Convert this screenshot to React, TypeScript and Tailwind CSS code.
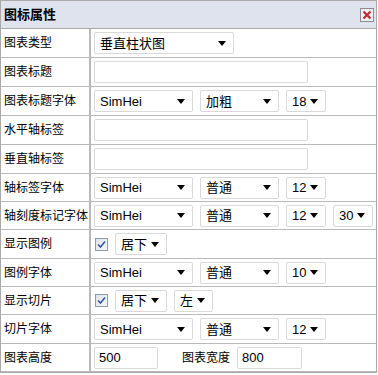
import React from 'react';

function Arrow() {
  return (
    <svg width="8" height="5" viewBox="0 0 8 5" className="shrink-0">
      <path d="M0 0 L8 0 L4 5 Z" fill="#000" />
    </svg>
  );
}

function Select({ value, width }: { value: string; width: string }) {
  return (
    <div
      className={`${width} h-[22px] flex items-center justify-between pl-[5px] pr-[7px] bg-white border border-[#d9d9d9] rounded-[2px] text-[13px] text-black`}
    >
      <span className="leading-none">{value}</span>
      <Arrow />
    </div>
  );
}

function TextBox({ value = '', width }: { value?: string; width: string }) {
  return (
    <div
      className={`${width} h-[22px] flex items-center px-[4px] bg-white border border-[#d9d9d9] rounded-[2px] text-[13px] text-black`}
    >
      {value}
    </div>
  );
}

function Check() {
  return (
    <div className="w-[13px] h-[13px] border border-[#8b9ab4] bg-gradient-to-br from-[#dfe3ea] to-[#f6f7f9] flex items-center justify-center">
      <svg width="9" height="9" viewBox="0 0 9 9">
        <path d="M1 4.5 L3.5 7 L8 1.5" stroke="#3b57a8" strokeWidth="1.6" fill="none" />
      </svg>
    </div>
  );
}

function Row({ label, h, children }: { label: string; h: string; children?: React.ReactNode }) {
  return (
    <div className={`flex ${h} border-b border-[#b9b9b9]`}>
      <div className="w-[90px] shrink-0 border-r-2 border-[#b9b9b9] flex items-center pl-[3px] text-[12px] text-black whitespace-nowrap">
        {label}
      </div>
      <div className="flex-1 flex items-center pl-[3px] gap-[7px]">{children}</div>
    </div>
  );
}

export default function App() {
  return (
    <div className="w-[378px] h-[375px] bg-white font-['Liberation_Sans','Noto_Sans_CJK_SC',sans-serif]">
      <div className="w-[377px] border border-[#a9a9a9]">
        {/* Header */}
        <div className="h-[28px] bg-[#dfe3ee] border-b border-[#a9a9a9] flex items-center justify-between pl-[3px] pr-[2px]">
          <span className="text-[13px] font-bold text-black">图标属性</span>
          <div className="w-[14px] h-[14px] border border-[#8c8c8c] bg-[#eef0f5] flex items-center justify-center">
            <svg width="10" height="10" viewBox="0 0 10 10">
              <path d="M1.5 1.5 L8.5 8.5 M8.5 1.5 L1.5 8.5" stroke="#c42a36" strokeWidth="2.2" />
            </svg>
          </div>
        </div>

        <Row label="图表类型" h="h-[29px]">
          <Select value="垂直柱状图" width="w-[140px]" />
        </Row>
        <Row label="图表标题" h="h-[29px]">
          <TextBox width="w-[214px]" />
        </Row>
        <Row label="图表标题字体" h="h-[29px]">
          <Select value="SimHei" width="w-[99px]" />
          <Select value="加粗" width="w-[79px]" />
          <Select value="18" width="w-[40px]" />
        </Row>
        <Row label="水平轴标签" h="h-[29px]">
          <TextBox width="w-[214px]" />
        </Row>
        <Row label="垂直轴标签" h="h-[29px]">
          <TextBox width="w-[214px]" />
        </Row>
        <Row label="轴标签字体" h="h-[28px]">
          <Select value="SimHei" width="w-[99px]" />
          <Select value="普通" width="w-[79px]" />
          <Select value="12" width="w-[40px]" />
        </Row>
        <Row label="轴刻度标记字体" h="h-[28px]">
          <Select value="SimHei" width="w-[99px]" />
          <Select value="普通" width="w-[79px]" />
          <Select value="12" width="w-[40px]" />
          <Select value="30" width="w-[40px]" />
        </Row>
        <Row label="显示图例" h="h-[29px]">
          <div className="pl-[1px]">
            <Check />
          </div>
          <Select value="居下" width="w-[52px]" />
        </Row>
        <Row label="图例字体" h="h-[28px]">
          <Select value="SimHei" width="w-[99px]" />
          <Select value="普通" width="w-[79px]" />
          <Select value="10" width="w-[40px]" />
        </Row>
        <Row label="显示切片" h="h-[28px]">
          <div className="pl-[1px]">
            <Check />
          </div>
          <Select value="居下" width="w-[52px]" />
          <Select value="左" width="w-[39px]" />
        </Row>
        <Row label="切片字体" h="h-[29px]">
          <Select value="SimHei" width="w-[99px]" />
          <Select value="普通" width="w-[79px]" />
          <Select value="12" width="w-[40px]" />
        </Row>
        <Row label="图表高度" h="h-[28px]">
          <TextBox value="500" width="w-[64px]" />
          <span className="ml-[17px] text-[12px] text-black">图表宽度</span>
          <TextBox value="800" width="w-[65px]" />
        </Row>
      </div>
    </div>
  );
}
